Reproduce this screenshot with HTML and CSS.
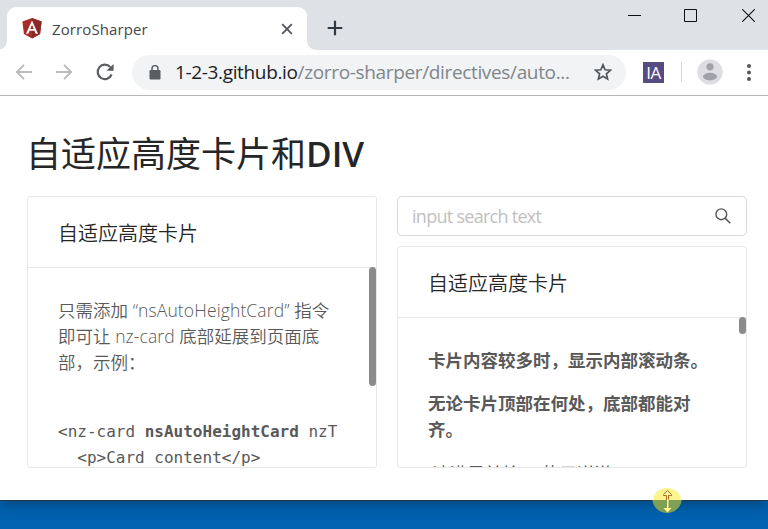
FILE: index.html
```html
<!DOCTYPE html>
<html lang="zh-CN">
<head>
<meta charset="utf-8">
<title>ZorroSharper</title>
<link rel="stylesheet" href="styles.css">
</head>
<body>
<div class="browser">
  <header class="tabbar">
    <div class="tab">
      <svg class="logo" width="20" height="21" viewBox="0 0 20 21"><path fill="#a82c2a" d="M10 0 19.6 3.4 18.1 16 10 20.6 1.9 16 .4 3.4z"/><path fill="#8c2826" d="M10 0 19.6 3.4 18.1 16 10 20.6z"/><path fill="#fff" fill-rule="evenodd" d="M10 2.5 16 15.8H13.7L12.4 12.8H7.6L6.3 15.8H4zM10 6.7 8.3 11H11.7z"/></svg>
      <span class="tab-name">ZorroSharper</span>
      <svg class="tab-close" width="12" height="12" viewBox="0 0 12 12"><path d="M1.2 1.2 10.8 10.8M10.8 1.2 1.2 10.8" stroke="#54585c" stroke-width="1.9"/></svg>
    </div>
    <svg class="plus" width="16" height="16" viewBox="0 0 16 16"><path d="M8 .7V15.3M.7 8H15.3" stroke="#303942" stroke-width="2.2"/></svg>
    <div class="controls">
      <svg width="13" height="13" viewBox="0 0 13 13"><path d="M0 6.5H13" stroke="#111"/></svg>
      <svg width="13" height="13" viewBox="0 0 13 13"><path d="M.5.5H12.5V12.5H.5z" fill="none" stroke="#111"/></svg>
      <svg width="13" height="13" viewBox="0 0 13 13"><path d="M.3.3 12.7 12.7M12.7.3.3 12.7" stroke="#111" stroke-width="1.1"/></svg>
    </div>
  </header>
  <nav class="toolbar">
    <svg class="nav" width="16" height="16" viewBox="0 0 16 16"><path d="M16 8H1.5M8 .8.9 8 8 15.2" fill="none" stroke="#bcbabb" stroke-width="1.9"/></svg>
    <svg class="nav" width="16" height="16" viewBox="0 0 16 16"><path d="M0 8H14.5M8 .8 15.1 8 8 15.2" fill="none" stroke="#bcbabb" stroke-width="1.9"/></svg>
    <svg class="nav reload" width="18" height="18" viewBox="0 0 18 18"><path d="M15.6 11.5A7.2 7.2 0 1 1 14.2 4" fill="none" stroke="#5a5e61" stroke-width="2.2"/><path d="M17.6 1V7.8H10.4z" fill="#5a5e61"/></svg>
    <div class="address">
      <svg class="lock" width="12" height="15" viewBox="0 0 12 15"><rect x=".5" y="5" width="11" height="9.5" rx="1.2" fill="#5a5e61"/><path d="M3 6V3.6a3 3 0 0 1 6 0V6" fill="none" stroke="#5a5e61" stroke-width="1.5"/></svg>
      <span class="url"><b>1-2-3.github.io</b>/zorro-sharper/directives/auto...</span>
      <svg class="star" width="18" height="18" viewBox="0 0 18 18"><path d="M9 1.8 11.1 6.8 16.5 7.2 12.4 10.8 13.6 16 9 13.2 4.4 16 5.6 10.8 1.5 7.2 6.9 6.8z" fill="none" stroke="#54585c" stroke-width="1.7"/></svg>
    </div>
    <span class="extension">IA</span>
    <span class="divider"></span>
    <svg class="avatar" width="26" height="26" viewBox="0 0 26 26"><circle cx="13" cy="13" r="12.6" fill="#dedee2"/><circle cx="13" cy="7.8" r="3.6" fill="#a0a1a9"/><ellipse cx="13" cy="17.6" rx="7" ry="3.8" fill="#a0a1a9"/></svg>
    <svg class="dots" width="4" height="17" viewBox="0 0 4 17"><g fill="#54585c"><circle cx="2" cy="2" r="2"/><circle cx="2" cy="8.5" r="2"/><circle cx="2" cy="15" r="2"/></g></svg>
  </nav>
  <main class="page">
    <h1>自适应高度卡片和<span class="div-word">DIV</span></h1>
    <div class="columns">
      <section class="card">
        <h2>自适应高度卡片</h2>
        <div class="body">
          <p class="intro">只需添加<span class="latin"> “nsAutoHeightCard” </span>指令<br>即可让<span class="latin word"> nz-card </span>底部延展到页面底<br>部，示例：</p>
          <pre>&lt;nz-card <b>nsAutoHeightCard</b> nzT
  &lt;p&gt;Card content&lt;/p&gt;</pre>
          <span class="thumb"></span>
        </div>
      </section>
      <div class="right">
        <div class="search"><span>input search text</span>
          <svg width="16" height="16" viewBox="0 0 16 16"><circle cx="6.3" cy="6.3" r="5.4" fill="none" stroke="#555" stroke-width="1.4"/><path d="M10.2 10.2 15.3 15.3" stroke="#555" stroke-width="1.6"/></svg>
        </div>
        <section class="card">
          <h2>自适应高度卡片</h2>
          <div class="body strong">
            <p>卡片内容较多时，显示内部滚动条。</p>
            <p>无论卡片顶部在何处，底部都能对<br>齐。</p>
            <p class="last">请满足并给， 使用详说</p>
            <span class="thumb short"></span>
          </div>
        </section>
      </div>
    </div>
  </main>
</div>
<svg class="cursor" width="30" height="30" viewBox="0 0 30 30"><path d="M.7 14a14.5 14.5 0 0 1 28.6 0z" fill="#fcf58b"/><path d="M.3 14H29.7A14.8 14.8 0 0 1 .3 14z" fill="#7f9f55"/><path d="M14.5 14V9.5H11.5V8.5L15.5 4.5 19.5 8.5V9.5H16.5V14" fill="#fff9a0" stroke="#b46c25"/><path d="M15 13H16.5V22H19.5L15.5 26.5 11.5 22H15z" fill="#fff78c"/></svg>
</body>
</html>
```
FILE: styles.css
```css
* { box-sizing: border-box; }
body {
  margin: 0;
  width: 768px;
  height: 529px;
  overflow: hidden;
  background: #0062b1;
  font-family: "Open Sans", "Noto Sans CJK SC", sans-serif;
}
.browser {
  height: 500px;
  background: #fff;
  box-shadow: 0 1px 0 #24384b, 0 2px 16px rgba(0, 0, 0, .4);
}
svg { display: block; flex: none; }

.tabbar { display: flex; height: 50px; background: #dee1e6; }
.tab {
  position: relative;
  display: flex;
  align-items: center;
  width: 300px;
  height: 43px;
  margin: 7px 0 0 7px;
  padding: 0 14px 0 15px;
  border-radius: 9px 9px 0 0;
  background: #fff;
}
.tab::before, .tab::after {
  content: "";
  position: absolute;
  bottom: 0;
  width: 9px;
  height: 9px;
}
.tab::before { left: -9px; background: radial-gradient(circle at 0 0, #dee1e6 8.5px, #fff 9px); }
.tab::after { right: -9px; background: radial-gradient(circle at 100% 0, #dee1e6 8.5px, #fff 9px); }
.tab-name { margin-left: 10px; font-size: 15px; line-height: 20px; color: #45484c; letter-spacing: .1px; }
.tab-close { margin-left: auto; }
.plus { margin: 20px 0 0 20px; }
.controls { display: flex; gap: 44px; margin: 9px 13px 0 auto; }
.controls svg:nth-child(2) { margin: 0 1px 0 -1px; }

.toolbar {
  display: flex;
  align-items: center;
  height: 46px;
  padding: 0 17px 1px 16px;
  border-bottom: 1px solid #b6b6b6;
}
.nav { margin-right: 24px; }
.reload { margin-right: 18px; }
.address {
  display: flex;
  align-items: center;
  width: 494px;
  height: 35px;
  padding: 0 14px 0 17px;
  border-radius: 18px;
  background: #f1f3f4;
}
.url { margin-left: 14px; font-size: 19px; line-height: 26px; letter-spacing: -.35px; color: #80868b; white-space: nowrap; }
.url b { font-weight: 400; color: #202124; }
.star { margin-left: auto; }
.extension {
  width: 21px;
  height: 21px;
  margin-left: 17px;
  background: #574b84;
  color: #fff;
  font-size: 17px;
  line-height: 21px;
  letter-spacing: -.5px;
  text-align: center;
}
.divider { width: 1px; height: 20px; margin: 0 15px 0 17px; background: #d0d2d5; }
.dots { margin-left: auto; }

.page { padding: 31px 21px 0 27px; }
h1 { margin: 0 0 0 -1px; height: 69px; font-size: 35px; line-height: 54px; font-weight: 400; color: #262626; white-space: nowrap; }
.div-word { font-weight: 600; }
.columns { display: flex; gap: 20px; height: 272px; }
.columns > * { width: 350px; flex: none; }
.card { display: flex; flex-direction: column; border: 1px solid #e8e8e8; border-radius: 3px; overflow: hidden; }
h2 {
  margin: 0;
  flex: none;
  height: 71px;
  padding-left: 30px;
  border-bottom: 1px solid #e8e8e8;
  font-size: 20px;
  line-height: 73px;
  font-weight: 350;
  color: #262626;
}
.body { position: relative; flex: 1; min-height: 0; margin-top: -1px; overflow: hidden; padding: 30px 31px 0 30px; font-size: 17.5px; line-height: 26px; color: #595959; }
.body p { margin: 0 0 17px; white-space: nowrap; }
.body .intro { height: 78px; margin-bottom: 44px; font-weight: 350; }
.latin { letter-spacing: .12px; }
.word { letter-spacing: .1px; }
pre { margin: 0; font: 16px/26px "DejaVu Sans Mono", monospace; white-space: pre; }
.thumb { position: absolute; top: 0; right: 0; width: 7px; height: 119px; border-radius: 4px; background: #8c8a8b; }
.short { height: 17px; }
.right { display: flex; flex-direction: column; gap: 10px; }
.right .card { flex: 1; min-height: 0; }
.search {
  display: flex;
  align-items: center;
  justify-content: space-between;
  height: 40px;
  padding: 0 15px 0 14px;
  border: 1px solid #d9d9d9;
  border-radius: 5px;
  font-size: 18px;
  color: #bfbfbf;
}
.search span { letter-spacing: -.72px; }
.strong { font-weight: 700; }
.body .last { font-weight: 400; margin: 18px 0 0 4px; }
.cursor { position: absolute; left: 652px; top: 486px; }
```
